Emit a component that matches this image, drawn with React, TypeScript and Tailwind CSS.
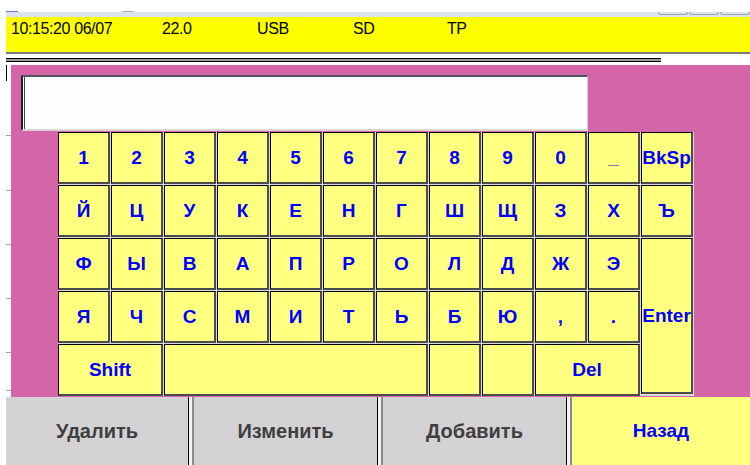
import React from 'react';

const ROWS: string[][] = [
  ['1', '2', '3', '4', '5', '6', '7', '8', '9', '0', '_', 'BkSp'],
  ['Й', 'Ц', 'У', 'К', 'Е', 'Н', 'Г', 'Ш', 'Щ', 'З', 'Х', 'Ъ'],
  ['Ф', 'Ы', 'В', 'А', 'П', 'Р', 'О', 'Л', 'Д', 'Ж', 'Э'],
  ['Я', 'Ч', 'С', 'М', 'И', 'Т', 'Ь', 'Б', 'Ю', ',', '.'],
];

const keyClass =
  'flex items-center justify-center bg-[#ffff80] border-t border-l border-black border-r-2 border-b-2 border-r-[#4c4c4c] border-b-[#4c4c4c] text-[#0000ff] font-bold text-[19px] leading-none select-none';

function Key({ label, className = '' }: { label?: string; className?: string }) {
  return <div className={`${keyClass} ${className}`}>{label}</div>;
}

function Divider() {
  return (
    <div className="w-[6px] h-full flex">
      <div className="w-px bg-black" />
      <div className="w-[3px] bg-[#f4f4f4]" />
      <div className="w-[2px] bg-[#8a8a8a]" />
    </div>
  );
}

function BottomButton({ label, active = false, className = '' }: { label: string; active?: boolean; className?: string }) {
  return (
    <div
      className={`h-full flex items-center justify-center font-bold ${
        active ? 'bg-[#ffff80] text-[#0000ff] text-[19px]' : 'bg-[#d4d2d4] text-[#404040] text-[20px]'
      } ${className}`}
    >
      {label}
    </div>
  );
}

export default function App() {
  return (
    <div
      className="w-[750px] h-[465px] bg-white overflow-hidden flex flex-col"
      style={{ fontFamily: '"Liberation Sans", Arial, sans-serif' }}
    >
      {/* window chrome */}
      <div className="h-[12px] shrink-0 pl-[6px] flex items-end">
        <div className="w-[12px] h-px bg-[#6a7fd0]" />
        <div className="ml-[104px] w-[12px] h-px bg-[#b0b0b0]" />
      </div>
      <div className="h-[5px] shrink-0 ml-[6px] bg-[#dce3ec] flex justify-end gap-px">
        <div className="w-[30px] h-[3px] border border-t-0 border-[#9aa3b0] rounded-b-[3px]" />
        <div className="w-[30px] h-[3px] border border-t-0 border-[#9aa3b0] rounded-b-[3px]" />
        <div className="w-[30px] h-[3px] border border-t-0 border-[#9aa3b0] rounded-b-[3px]" />
      </div>

      {/* status bar */}
      <div className="h-[37px] shrink-0 ml-[6px] bg-[#ffff00] border-b-2 border-[#7d7d7d] flex items-start pt-[2px] pl-[5px] text-[16px] text-black leading-[20px] tracking-[-0.4px]">
        <span className="w-[151px]">10:15:20 06/07</span>
        <span className="w-[95px]">22.0</span>
        <span className="w-[96px]">USB</span>
        <span className="w-[94px]">SD</span>
        <span>TP</span>
      </div>

      {/* frame edge */}
      <div className="h-[11px] shrink-0 pt-[4px] pl-[6px]">
        <div className="w-[655px] h-[4px] bg-[#9c9c9c] border-y border-black" />
      </div>

      {/* main area */}
      <div className="h-[332px] shrink-0 flex">
        <div className="w-[11px] pl-[6px] flex flex-col items-start">
          <div className="w-px h-[16px] bg-black" />
          <div className="mt-[54px] w-[5px] h-px bg-[#a0a0a0]" />
          <div className="mt-[54px] w-[5px] h-px bg-[#a0a0a0]" />
          <div className="mt-[53px] w-[5px] h-px bg-[#a0a0a0]" />
          <div className="mt-[53px] w-[5px] h-px bg-[#a0a0a0]" />
          <div className="mt-[53px] w-[5px] h-px bg-[#a0a0a0]" />
          <div className="mt-[37px] w-[5px] h-px bg-[#a0a0a0]" />
        </div>

        <div className="flex-1 bg-[#d465a9] pl-[10px] pt-[10px]">
          <div className="w-[567px] h-[56px] bg-[#fdfdfd] border-t-2 border-l-2 border-t-[#555] border-l-[#222] border-r border-b-2 border-r-[#cfcfcf] border-b-[#d6d6d6] shadow-[inset_1px_0_0_#ffffff,inset_2px_0_0_#444]" />

          <div className="mt-px ml-[37px] w-[636px] grid grid-cols-[repeat(12,52px)] grid-rows-[repeat(5,52px)] gap-px bg-[#dadada]">
            {ROWS[0].map((k) => (
              <Key key={'r0' + k} label={k} />
            ))}
            {ROWS[1].map((k) => (
              <Key key={'r1' + k} label={k} />
            ))}
            {ROWS[2].map((k) => (
              <Key key={'r2' + k} label={k} />
            ))}
            <Key label="Enter" className="col-start-12 row-start-3 row-span-3 mb-[2px]" />
            {ROWS[3].map((k) => (
              <Key key={'r3' + k} label={k} />
            ))}
            <Key label="Shift" className="col-span-2" />
            <Key className="col-span-5" />
            <Key />
            <Key />
            <Key label="Del" className="col-span-2" />
          </div>
        </div>
      </div>

      {/* bottom buttons */}
      <div className="h-[68px] shrink-0 pl-[6px] flex">
        <BottomButton label="Удалить" className="w-[182px]" />
        <Divider />
        <BottomButton label="Изменить" className="w-[183px]" />
        <Divider />
        <BottomButton label="Добавить" className="w-[183px]" />
        <Divider />
        <BottomButton label="Назад" active className="flex-1" />
      </div>
    </div>
  );
}
